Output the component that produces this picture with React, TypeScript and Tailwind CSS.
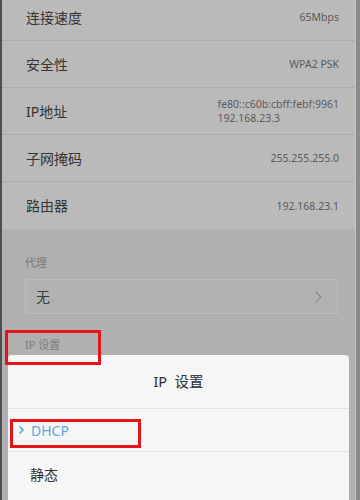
import React from "react";

const font = { fontFamily: '"Noto Sans", "Noto Sans CJK SC", sans-serif' };

function Row({ label, children, h = "h-[47px]", last = false }: { label: string; children: React.ReactNode; h?: string; last?: boolean }) {
  return (
    <div className={`flex items-center justify-between pl-[24px] pr-[16px] ${h} ${last ? "" : "border-b border-[#aaaaaa]"}`}>
      <span className="text-[14px] text-[#353535]">{label}</span>
      <div className="text-right text-[10.5px] leading-[14px] text-[#5a5a5a]">{children}</div>
    </div>
  );
}

export default function App() {
  return (
    <div className="relative flex h-[500px] w-[360px] overflow-hidden bg-[#b1b1b1]" style={font}>
      <div className="w-[2px] shrink-0 bg-[#4e4e4e]" />
      <div className="flex min-w-0 flex-1 flex-col">
        <div className="bg-[#bababa]">
          <div className="-mt-[6px]">
            <Row label="连接速度">65Mbps</Row>
            <Row label="安全性">WPA2 PSK</Row>
            <Row label="IP地址">
              <div>fe80::c60b:cbff:febf:9961</div>
              <div className="text-left">192.168.23.3</div>
            </Row>
            <Row label="子网掩码">255.255.255.0</Row>
            <Row label="路由器" last>192.168.23.1</Row>
          </div>
        </div>
        <div className="flex flex-1 flex-col bg-[#b0b0b0]">
          <div className="pl-[23px] pt-[27px] text-[11px] leading-[14px] text-[#7a7a7a]">代理</div>
          <div className="ml-[23px] mr-[17px] mt-[9px] flex h-[35px] items-center justify-between border border-[#bcbcbc] bg-[#b2b2b2] pl-[10px] pr-[14px]">
            <span className="text-[14px] text-[#3c3c3c]">无</span>
            <svg width="9" height="14" viewBox="0 0 9 14" fill="none">
              <path d="M1.5 1.5 L7 7 L1.5 12.5" stroke="#8f8f8f" strokeWidth="1.3" />
            </svg>
          </div>
          <div className="pl-[23px] pt-[24px] text-[11px] leading-[14px] text-[#7d7d7d]">IP 设置</div>
          <div className="mx-[6px] mt-[3px] flex flex-1 flex-col rounded-t-[4px] bg-[#f6f6f6]">
            <div className="flex h-[54px] items-center justify-center border-b border-[#e3e3e3] text-[14.5px] text-[#2e2e2e]">IP&nbsp; 设置</div>
            <div className="flex h-[43px] items-center border-b border-[#e3e3e3] pl-[10px] text-[14px] text-[#5aa7e0]">
              <svg width="7" height="10" viewBox="0 0 7 10" fill="none" className="mr-[6px]">
                <path d="M1.5 1.5 L5 5 L1.5 8.5" stroke="#5aa7e0" strokeWidth="1.6" />
              </svg>
              DHCP
            </div>
            <div className="flex h-[44px] items-center pl-[22px] text-[14px] text-[#333333]">静态</div>
          </div>
        </div>
      </div>
      <div className="flex w-[5px] shrink-0">
        <div className="w-[1px] bg-[#c4c4c4]" />
        <div className="flex-1 bg-[#8a8a8a]" />
      </div>
      {/* annotation boxes */}
      <div className="absolute left-[5px] top-[330px] h-[35px] w-[96px] border-[3px] border-[#e5141b]" />
      <div className="absolute left-[10px] top-[419px] h-[29px] w-[131px] border-[3px] border-[#e5141b]" />
    </div>
  );
}
